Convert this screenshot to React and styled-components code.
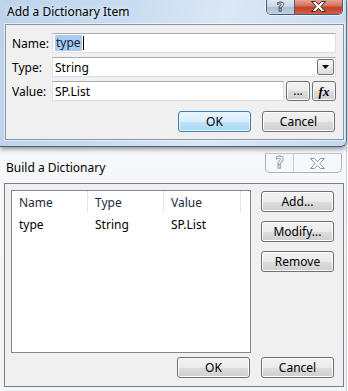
import React from "react";
import styled, { createGlobalStyle, css } from "styled-components";

const GlobalStyle = createGlobalStyle`
  html, body {
    margin: 0;
    padding: 0;
    background: #ffffff;
  }
  body {
    font-family: "Noto Sans", "Open Sans", sans-serif;
    font-size: 12px;
    color: #000;
  }
  * {
    box-sizing: border-box;
  }
`;

const Screen = styled.div`
  width: 348px;
  height: 391px;
  overflow: hidden;
  background: #ffffff;
  display: flex;
  flex-direction: column;
`;

/* window frames */
const Frame = styled.div`
  width: 347px;
  flex-shrink: 0;
  display: flex;
  flex-direction: column;
  ${(props) =>
    props.$active
      ? css`
          position: relative;
          z-index: 2;
          height: 147px;
          background: linear-gradient(
            100deg,
            #bdd3eb 0%,
            #c9dcf0 35%,
            #dbe8f5 62%,
            #d2e2f3 78%,
            #c3d8ee 100%
          );
          border-right: 1px solid #5d7189;
          border-bottom: 1px solid #4e6178;
          border-bottom-right-radius: 6px;
          box-shadow: 0 2px 5px rgba(0, 0, 0, 0.45);
        `
      : css`
          flex: 1;
          background: linear-gradient(180deg, #f6f8fb 0%, #f1f4f8 100%);
          border-right: 1px solid #c3ccd6;
        `}
`;

const TitleBar = styled.div`
  display: flex;
  justify-content: space-between;
  align-items: flex-start;
  height: ${(props) => (props.$active ? "24px" : "36px")};
`;

const Title = styled.div`
  padding-left: ${(props) => (props.$active ? "7px" : "6px")};
  margin-top: ${(props) => (props.$active ? "4px" : "13px")};
  line-height: 16px;
  font-size: 12px;
  color: #000;
  text-shadow: ${(props) =>
    props.$active ? "0 0 6px rgba(255,255,255,0.9)" : "none"};
`;

const Caption = styled.div`
  display: flex;
  margin-right: ${(props) => (props.$active ? "3px" : "4px")};
  margin-top: ${(props) => (props.$active ? "0" : "6px")};
  height: ${(props) => (props.$active ? "15px" : "20px")};
  ${(props) =>
    props.$active
      ? css`
          border: 1px solid #4a5d74;
          border-top: none;
          box-shadow: 0 0 0 1px rgba(255, 255, 255, 0.5);
        `
      : css`
          border: 1px solid #a9b1bb;
          border-top-color: #c3c9d0;
        `}
  border-radius: 0 0 5px 5px;
  overflow: hidden;
`;

const CapButton = styled.div`
  display: flex;
  align-items: center;
  justify-content: center;
  width: ${(props) => (props.$close ? "47px" : "28px")};
  height: 100%;
  ${(props) =>
    props.$active
      ? props.$close
        ? css`
            background: linear-gradient(
              180deg,
              #e6a394 0%,
              #d6735f 40%,
              #c43f27 55%,
              #d1604a 100%
            );
          `
        : css`
            background: linear-gradient(
              180deg,
              #dfe8f2 0%,
              #c9d7e6 45%,
              #aebfd2 55%,
              #c2d2e3 100%
            );
            border-right: 1px solid #4a5d74;
          `
      : css`
          background: transparent;
          border-right: ${props.$close ? "none" : "1px solid #c3c9d0"};
        `}
`;

const HelpGlyph = styled.span`
  font-family: "DejaVu Sans", sans-serif;
  font-weight: bold;
  font-size: ${(props) => (props.$active ? "13px" : "15px")};
  line-height: 1;
  color: #ffffff;
  -webkit-text-stroke: 0.8px ${(props) => (props.$active ? "#3b4552" : "#8c939c")};
  margin-top: ${(props) => (props.$active ? "-2px" : "0")};
`;

function CloseGlyph({ active }) {
  return (
    <svg
      width="15"
      height="11"
      viewBox="0 0 15 11"
      style={{ marginTop: active ? "-2px" : "0" }}
    >
      <polygon
        points="0.5,0.5 4.5,0.5 7.5,3.7 10.5,0.5 14.5,0.5 9.8,5.5 14.5,10.5 10.5,10.5 7.5,7.3 4.5,10.5 0.5,10.5 5.2,5.5"
        fill="#ffffff"
        stroke={active ? "#3a2a28" : "#8c939c"}
        strokeWidth="1"
        strokeLinejoin="round"
      />
    </svg>
  );
}

/* client area */
const Client = styled.div`
  background: #f0f0f0;
  border: 1px solid ${(props) => (props.$active ? "#8496ab" : "#7d7d7d")};
  box-shadow: ${(props) =>
    props.$active ? "0 0 0 1px rgba(255,255,255,0.55)" : "none"};
  width: ${(props) => (props.$active ? "339px" : "340px")};
  margin-left: ${(props) => (props.$active ? "5px" : "4px")};
`;

/* add item form */
const Form = styled.div`
  padding: 8px 7px 7px 6px;
  display: flex;
  flex-direction: column;
`;

const FieldRow = styled.div`
  display: flex;
  align-items: center;
  height: 20px;
  & + & {
    margin-top: 4px;
  }
`;

const Label = styled.div`
  width: 40px;
  flex-shrink: 0;
`;

const TextBox = styled.div`
  flex: 1;
  height: 20px;
  display: flex;
  align-items: center;
  background: #ffffff;
  border: 1px solid #dbdfe6;
  border-top-color: #abadb3;
  padding: 0 2px 0 2px;
  position: relative;
`;

const Selection = styled.span`
  background: #a8cbee;
  color: #0e2340;
  line-height: 16px;
  padding: 0 1px;
`;

const Caret = styled.span`
  width: 1px;
  height: 14px;
  background: #000;
  margin-left: 1px;
`;

const DropArrow = styled.div`
  position: absolute;
  right: 1px;
  top: 1px;
  width: 17px;
  height: 16px;
  border: 1px solid #707070;
  border-radius: 2px;
  background: linear-gradient(180deg, #fafafa 0%, #eaeaea 50%, #dcdcdc 100%);
  display: flex;
  align-items: center;
  justify-content: center;
`;

const SmallButton = styled.button`
  width: 24px;
  height: 20px;
  margin-left: 2px;
  padding: 0;
  border: 1px solid #707070;
  border-radius: 3px;
  background: linear-gradient(
    180deg,
    #f2f2f2 0%,
    #ebebeb 50%,
    #dddddd 51%,
    #cfcfcf 100%
  );
  box-shadow: inset 0 0 0 1px #fbfbfb;
  font-family: ${(props) =>
    props.$fx ? '"Liberation Serif", serif' : '"Noto Sans", sans-serif'};
  font-style: ${(props) => (props.$fx ? "italic" : "normal")};
  font-weight: ${(props) => (props.$fx ? "bold" : "normal")};
  font-size: ${(props) => (props.$fx ? "13px" : "12px")};
  line-height: 1;
  color: #000;
`;

const Footer = styled.div`
  display: flex;
  justify-content: flex-end;
  gap: ${(props) => (props.$gap ? props.$gap : "11px")};
  margin-top: ${(props) => (props.$top ? props.$top : "10px")};
  margin-right: ${(props) => (props.$right ? props.$right : "0")};
`;

const Button = styled.button`
  width: 73px;
  height: 21px;
  padding: 0;
  border: 1px solid ${(props) => (props.$default ? "#3c7fb1" : "#707070")};
  border-radius: 3px;
  background: ${(props) =>
    props.$default
      ? "linear-gradient(180deg, #e9f5fd 0%, #d8eefb 50%, #bfe3f8 51%, #a9d8f3 100%)"
      : "linear-gradient(180deg, #f2f2f2 0%, #ebebeb 50%, #dddddd 51%, #cfcfcf 100%)"};
  box-shadow: inset 0 0 0 1px
    ${(props) => (props.$default ? "#e6f4fc" : "#fbfbfb")};
  font-family: "Noto Sans", sans-serif;
  font-size: 12px;
  color: #000;
  line-height: 1;
`;

/* build dictionary body */
const Body = styled.div`
  padding: 6px 9px 8px 6px;
`;

const Main = styled.div`
  display: flex;
  gap: 10px;
`;

const ListView = styled.div`
  width: 240px;
  height: 163px;
  border: 1px solid #828790;
  background: #ffffff;
`;

const columns = "76px 76px 77px 1fr";

const Header = styled.div`
  display: grid;
  grid-template-columns: ${columns};
  height: 22px;
  background: #ffffff;
`;

const HeadCell = styled.div`
  display: flex;
  align-items: center;
  padding-left: 7px;
  color: #1b2940;
  border-right: ${(props) => (props.$last ? "none" : "1px solid #e3e5e8")};
`;

const Row = styled.div`
  display: grid;
  grid-template-columns: ${columns};
  height: 19px;
  margin-top: 2px;
`;

const Cell = styled.div`
  display: flex;
  align-items: center;
  padding-left: 7px;
  color: #000;
`;

const SideButtons = styled.div`
  display: flex;
  flex-direction: column;
  gap: 9px;
  padding-top: 1px;
`;

export default function App() {
  return (
    <>
      <GlobalStyle />
      <Screen>
        <Frame $active>
          <TitleBar $active>
            <Title $active>Add a Dictionary Item</Title>
            <Caption $active>
              <CapButton $active>
                <HelpGlyph $active>?</HelpGlyph>
              </CapButton>
              <CapButton $active $close>
                <CloseGlyph active />
              </CapButton>
            </Caption>
          </TitleBar>
          <Client $active>
            <Form>
              <FieldRow>
                <Label>Name:</Label>
                <TextBox>
                  <Selection>type</Selection>
                  <Caret />
                </TextBox>
              </FieldRow>
              <FieldRow>
                <Label>Type:</Label>
                <TextBox>
                  String
                  <DropArrow>
                    <svg width="7" height="4" viewBox="0 0 7 4">
                      <polygon points="0,0 7,0 3.5,4" fill="#000" />
                    </svg>
                  </DropArrow>
                </TextBox>
              </FieldRow>
              <FieldRow>
                <Label>Value:</Label>
                <TextBox>SP.List</TextBox>
                <SmallButton>...</SmallButton>
                <SmallButton $fx>fx</SmallButton>
              </FieldRow>
              <Footer $gap="11px" $top="10px" $right="1px">
                <Button $default>OK</Button>
                <Button>Cancel</Button>
              </Footer>
            </Form>
          </Client>
        </Frame>

        <Frame>
          <TitleBar>
            <Title>Build a Dictionary</Title>
            <Caption>
              <CapButton>
                <HelpGlyph>?</HelpGlyph>
              </CapButton>
              <CapButton $close>
                <CloseGlyph />
              </CapButton>
            </Caption>
          </TitleBar>
          <Client>
            <Body>
              <Main>
                <ListView>
                  <Header>
                    <HeadCell>Name</HeadCell>
                    <HeadCell>Type</HeadCell>
                    <HeadCell>Value</HeadCell>
                    <HeadCell $last />
                  </Header>
                  <Row>
                    <Cell>type</Cell>
                    <Cell>String</Cell>
                    <Cell>SP.List</Cell>
                  </Row>
                </ListView>
                <SideButtons>
                  <Button>Add...</Button>
                  <Button>Modify...</Button>
                  <Button>Remove</Button>
                </SideButtons>
              </Main>
              <Footer $gap="11px" $top="4px">
                <Button>OK</Button>
                <Button>Cancel</Button>
              </Footer>
            </Body>
          </Client>
        </Frame>
      </Screen>
    </>
  );
}
